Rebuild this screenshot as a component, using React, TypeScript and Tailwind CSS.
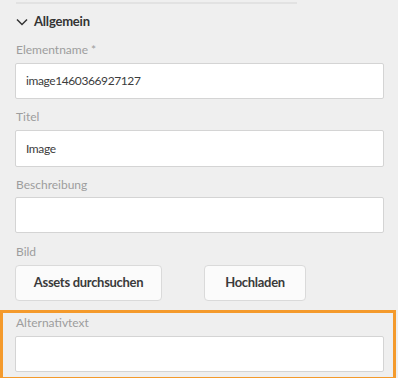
import React from "react"

const font = { fontFamily: "Lato, 'Noto Sans', sans-serif" }

function Label({ children, className = "" }: { children: React.ReactNode; className?: string }) {
  return <div className={`text-[12px] leading-[16px] text-[#9d9d9d] ${className}`}>{children}</div>
}

function TextField({ value, className = "" }: { value?: string; className?: string }) {
  return (
    <div
      className={`flex h-[36px] w-[369px] items-center rounded-[2px] border border-[#d4d4d4] bg-white pl-[10px] text-[12px] tracking-[-0.4px] text-[#3c3c3c] ${className}`}
    >
      {value}
    </div>
  )
}

function Button({ children, className = "" }: { children: React.ReactNode; className?: string }) {
  return (
    <button
      className={`flex h-[36px] items-center justify-center rounded-[4px] border border-[#dadada] bg-[#fbfbfb] text-[13px] font-bold tracking-[-0.3px] text-[#3a3a3a] ${className}`}
    >
      {children}
    </button>
  )
}

export default function App() {
  return (
    <div className="h-[378px] w-[398px] overflow-hidden bg-[#efefef]" style={font}>
      <div className="pt-[2px]">
        <div className="ml-[16px] h-[2px] w-[281px] bg-[#e2e2e2]" />
      </div>

      <div className="ml-[16px] mt-[8px] flex h-[20px] items-center gap-[6px]">
        <svg width="12" height="8" viewBox="0 0 12 8" fill="none">
          <path d="M1 1.5l5 5 5-5" stroke="#333" strokeWidth="1.5" />
        </svg>
        <span className="text-[13px] font-bold tracking-[-0.2px] text-[#333]">Allgemein</span>
      </div>

      <div className="pl-[15px]">
        <Label className="mt-[10px] pl-[1px]">Elementname *</Label>
        <TextField className="mt-[5px]" value="image1460366927127" />

        <Label className="mt-[10px] pl-[1px]">Titel</Label>
        <TextField className="mt-[5px] h-[37px]" value="Image" />

        <Label className="mt-[10px] pl-[1px]">Beschreibung</Label>
        <TextField className="mt-[4px]" />

        <Label className="mt-[11px] pl-[1px]">Bild</Label>
        <div className="mt-[5px] flex gap-[42px]">
          <Button className="w-[147px]">Assets durchsuchen</Button>
          <Button className="w-[102px]">Hochladen</Button>
        </div>
      </div>

      <div className="mt-[9px] h-[70px] w-[396px] border-[3px] border-[#f49a2c] pl-[12px]">
        <Label className="mt-[2px] pl-[1px]">Alternativtext</Label>
        <TextField className="mt-[5px] h-[35px]" />
      </div>
    </div>
  )
}
